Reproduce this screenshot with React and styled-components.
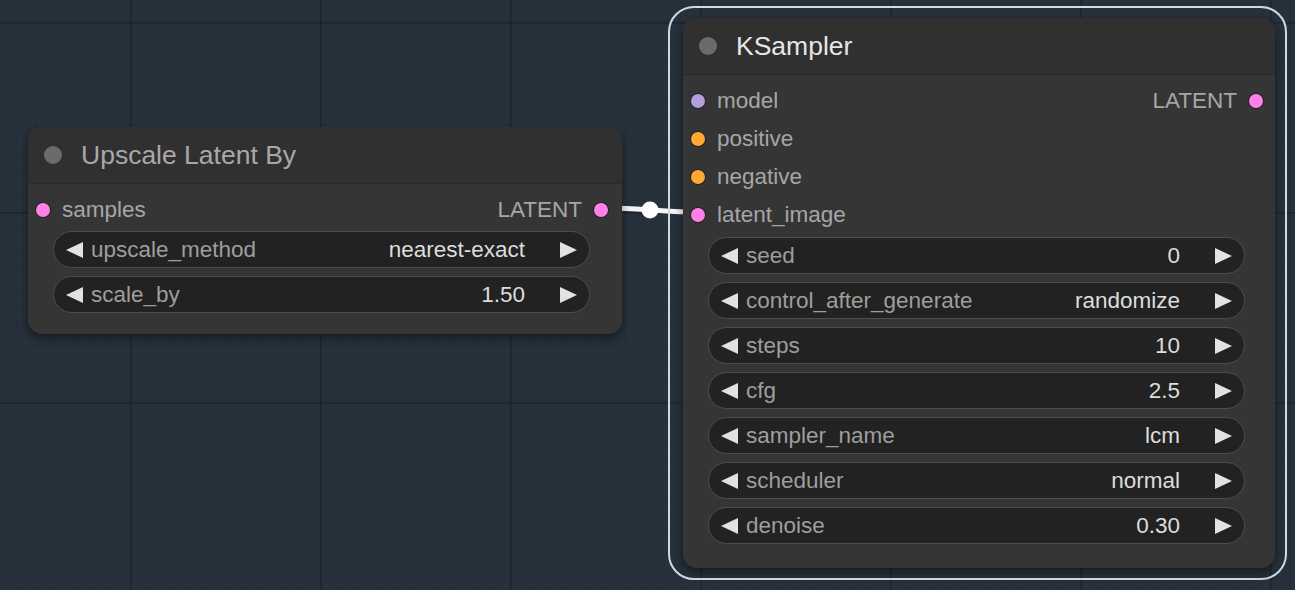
import React from "react";
import styled, { createGlobalStyle } from "styled-components";

const GlobalStyle = createGlobalStyle`
  html, body {
    margin: 0;
    padding: 0;
    background: #26313c;
    font-family: "Liberation Sans", Arial, sans-serif;
  }
`;

const upscaleWidgets = [
  { name: "upscale_method", value: "nearest-exact" },
  { name: "scale_by", value: "1.50" },
];

const samplerWidgets = [
  { name: "seed", value: "0" },
  { name: "control_after_generate", value: "randomize" },
  { name: "steps", value: "10" },
  { name: "cfg", value: "2.5" },
  { name: "sampler_name", value: "lcm" },
  { name: "scheduler", value: "normal" },
  { name: "denoise", value: "0.30" },
];

const samplerInputs = [
  { name: "model", color: "#b39ddb" },
  { name: "positive", color: "#ffa931" },
  { name: "negative", color: "#ffa931" },
  { name: "latent_image", color: "#ff80e6" },
];

function Widget({ name, value }) {
  return (
    <StyleWidget>
      <Arrow dir="left" />
      <WidgetName>{name}</WidgetName>
      <WidgetValue>{value}</WidgetValue>
      <Arrow dir="right" />
    </StyleWidget>
  );
}

function App() {
  return (
    <>
      <GlobalStyle />
      <Canvas>
        {/* link between the two latent slots */}
        <LinkLayer width="1295" height="590">
          <path
            d="M 608 208 C 640 208, 650 211, 690 212"
            stroke="#f4f4f4"
            strokeWidth="5"
            fill="none"
          />
          <circle cx="650" cy="210" r="8.5" fill="#ffffff" />
        </LinkLayer>

        <Node style={{ left: 28, top: 127, width: 594 }}>
          <Header>
            <TitleDot />
            <Title>Upscale Latent By</Title>
          </Header>
          <Body>
            <SlotRow>
              <Slot>
                <Dot color="#ff80e6" />
                <span>samples</span>
              </Slot>
              <Slot $out>
                <span>LATENT</span>
                <Dot color="#ff80e6" />
              </Slot>
            </SlotRow>
            <Widgets>
              {upscaleWidgets.map((w) => (
                <Widget key={w.name} {...w} />
              ))}
            </Widgets>
          </Body>
        </Node>

        <Selection style={{ left: 668, top: 6 }}>
          <Node $static style={{ width: 592 }}>
            <Header>
              <TitleDot />
              <Title $selected>KSampler</Title>
            </Header>
            <Body $tall>
              {samplerInputs.map((s, i) => (
                <SlotRow key={s.name}>
                  <Slot>
                    <Dot color={s.color} />
                    <span>{s.name}</span>
                  </Slot>
                  {i === 0 && (
                    <Slot $out $right={12}>
                      <span>LATENT</span>
                      <Dot color="#ff80e6" />
                    </Slot>
                  )}
                </SlotRow>
              ))}
              <Widgets $sampler>
                {samplerWidgets.map((w) => (
                  <Widget key={w.name} {...w} />
                ))}
              </Widgets>
            </Body>
          </Node>
        </Selection>
      </Canvas>
    </>
  );
}

const Canvas = styled.div`
  position: relative;
  width: 1295px;
  height: 590px;
  overflow: hidden;
  background-color: #26313c;
  background-image: linear-gradient(
      to right,
      rgba(0, 0, 0, 0.16) 2px,
      transparent 2px
    ),
    linear-gradient(to bottom, rgba(0, 0, 0, 0.16) 2px, transparent 2px),
    linear-gradient(to right, rgba(0, 0, 0, 0.06) 1px, transparent 1px),
    linear-gradient(to bottom, rgba(0, 0, 0, 0.06) 1px, transparent 1px);
  background-size: 190px 190px, 190px 190px, 19px 19px, 19px 19px;
  background-position: -60px 22px, -60px 22px, -60px 22px, -60px 22px;
`;

const LinkLayer = styled.svg`
  position: absolute;
  left: 0;
  top: 0;
  pointer-events: none;
`;

const Selection = styled.div`
  position: absolute;
  width: 619px;
  height: 574px;
  box-sizing: border-box;
  border: 2px solid #cfdae2;
  border-radius: 26px;
  padding: 10px 10px 10px 13px;
  display: flex;
`;

const Node = styled.div`
  position: ${(p) => (p.$static ? "relative" : "absolute")};
  box-sizing: border-box;
  display: flex;
  flex-direction: column;
  background: #353535;
  border-radius: 14px;
  box-shadow: 0 4px 10px rgba(0, 0, 0, 0.45);
  overflow: hidden;
`;

const Header = styled.div`
  height: 56px;
  display: flex;
  align-items: center;
  padding-left: 16px;
  background: #303030;
  border-bottom: 1px solid #2a2a2a;
`;

const TitleDot = styled.div`
  width: 18px;
  height: 18px;
  border-radius: 50%;
  background: #6b6b6b;
`;

const Title = styled.div`
  margin-left: 19px;
  font-size: 26.5px;
  color: ${(p) => (p.$selected ? "#e6e6e6" : "#a8a8a8")};
`;

const Body = styled.div`
  padding: 7px 0 ${(p) => (p.$tall ? "22px" : "21px")};
  display: flex;
  flex-direction: column;
`;

const SlotRow = styled.div`
  position: relative;
  height: 38px;
  display: flex;
  align-items: center;
`;

const Slot = styled.div`
  display: flex;
  align-items: center;
  gap: 12px;
  font-size: 22.5px;
  color: #a6a6a6;
  ${(p) =>
    p.$out
      ? `margin-left: auto; margin-right: ${p.$right || 14}px;`
      : `margin-left: 8px;`}
`;

const Dot = styled.div`
  width: 14px;
  height: 14px;
  border-radius: 50%;
  background: ${(p) => p.color};
  box-shadow: 0 0 0 1px rgba(0, 0, 0, 0.35);
`;

const Widgets = styled.div`
  display: flex;
  flex-direction: column;
  gap: 8px;
  padding: ${(p) => (p.$sampler ? "3px 30px 0 25px" : "2px 32px 0 25px")};
`;

const StyleWidget = styled.div`
  height: 37px;
  box-sizing: border-box;
  display: flex;
  align-items: center;
  padding: 0 12px 0 12px;
  background: #222222;
  border: 1.5px solid #4e4e4e;
  border-radius: 19px;
  font-size: 22.5px;
`;

const Arrow = styled.span`
  width: 0;
  height: 0;
  border-top: 8.5px solid transparent;
  border-bottom: 8.5px solid transparent;
  ${(p) =>
    p.dir === "left"
      ? "border-right: 17px solid #e2e2e2;"
      : "border-left: 17px solid #e2e2e2;"}
`;

const WidgetName = styled.span`
  margin-left: 8px;
  color: #9e9e9e;
  flex: 1;
`;

const WidgetValue = styled.span`
  color: #dddddd;
  margin-right: 35px;
`;

export default App;
